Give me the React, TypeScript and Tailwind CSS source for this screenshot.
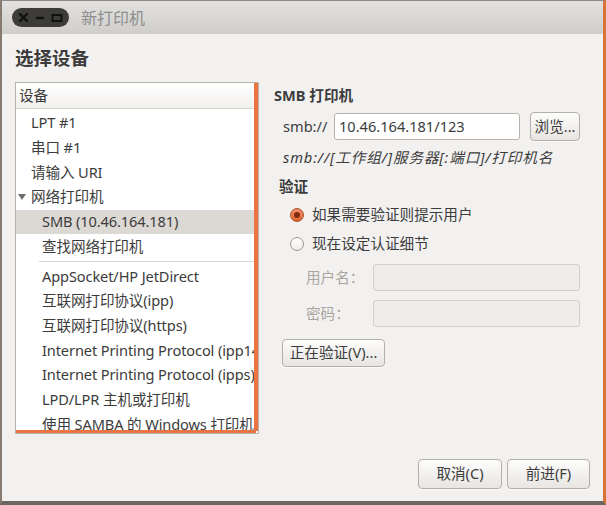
import React from "react";

const font = { fontFamily: '"Noto Sans", "Noto Sans CJK SC", sans-serif' };

type Row = { label: string; level: 1 | 2; selected?: boolean; expander?: boolean };

const topRows: Row[] = [
  { label: "LPT #1", level: 1 },
  { label: "串口 #1", level: 1 },
  { label: "请输入 URI", level: 1 },
  { label: "网络打印机", level: 1, expander: true },
  { label: "SMB (10.46.164.181)", level: 2, selected: true },
  { label: "查找网络打印机", level: 2 },
];

const bottomRows: Row[] = [
  { label: "AppSocket/HP JetDirect", level: 2 },
  { label: "互联网打印协议(ipp)", level: 2 },
  { label: "互联网打印协议(https)", level: 2 },
  { label: "Internet Printing Protocol (ipp14)", level: 2 },
  { label: "Internet Printing Protocol (ipps)", level: 2 },
  { label: "LPD/LPR 主机或打印机", level: 2 },
  { label: "使用 SAMBA 的 Windows 打印机", level: 2 },
];

function TreeRow({ row }: { row: Row }) {
  return (
    <div
      className={`relative flex h-[24.7px] items-center whitespace-nowrap ${
        row.selected ? "bg-[#dcd8d4]" : ""
      } ${row.level === 1 ? "pl-[15px]" : "pl-[26px]"}`}
    >
      {row.expander && (
        <svg className="absolute left-[2px] top-[9px]" width="8" height="7" viewBox="0 0 8 7">
          <path d="M0 0 H8 L4 6 Z" fill="#6f6f6f" />
        </svg>
      )}
      <span>{row.label}</span>
    </div>
  );
}

function Button({ children, className = "" }: { children: React.ReactNode; className?: string }) {
  return (
    <div
      className={`flex items-center justify-center rounded-[4px] border border-[#b5afa9] bg-gradient-to-b from-[#fdfdfc] to-[#e8e5e2] text-[#3c3c3c] shadow-[0_1px_0_rgba(255,255,255,0.8)] ${className}`}
    >
      {children}
    </div>
  );
}

export default function App() {
  return (
    <div
      style={font}
      className="flex h-[505px] w-[606px] flex-col overflow-hidden border-b-[4px] border-l-2 border-r-[3px] border-t border-b-[#6d6660] border-l-[#877a71] border-r-[#d8733a] border-t-[#8a8a8a] bg-[#f2f1f0] text-[14.6px] text-[#3c3c3c]"
    >
      {/* title bar */}
      <div className="flex h-[33px] shrink-0 items-center bg-gradient-to-b from-[#e2e1df] to-[#cfcecb] pl-[10px]">
        <div className="flex h-[19px] w-[57px] items-center justify-between rounded-full bg-[#3d3c38] px-[6px]">
          <svg width="11" height="11" viewBox="0 0 11 11">
            <path d="M2 2 L9 9 M9 2 L2 9" stroke="#111" strokeWidth="2.4" strokeLinecap="round" />
          </svg>
          <svg width="10" height="10" viewBox="0 0 10 10">
            <path d="M1 5 H9" stroke="#111" strokeWidth="2.4" />
          </svg>
          <svg width="12" height="10" viewBox="0 0 12 10">
            <rect x="1.5" y="2" width="9" height="6" fill="none" stroke="#111" strokeWidth="2" />
          </svg>
        </div>
        <span className="ml-[12px] text-[16px] text-[#8e8e8e]">新打印机</span>
      </div>

      {/* body */}
      <div className="flex flex-1 flex-col">
        <div className="flex">
          {/* left column */}
          <div className="pl-[13px] pt-[14px]">
            <div className="flex h-[20px] items-center text-[18.5px] font-bold text-[#3c3c3c]">选择设备</div>
            <div className="mt-[14px] h-[352px] w-[244px] border border-[#b8b2ab] bg-white">
              <div className="relative h-full overflow-hidden">
                <div className="flex h-[26px] items-center border-b border-[#d9d5cf] bg-gradient-to-b from-white to-[#f3f1ee] pl-[3px]">
                  设备
                </div>
                <div className="pt-[2px] tracking-[-0.12px]">
                  {topRows.map((r) => (
                    <TreeRow key={r.label} row={r} />
                  ))}
                  <div className="flex h-[5px] items-center pl-[23px]">
                    <div className="h-px w-full bg-[#dad6d1]" />
                  </div>
                  {bottomRows.map((r) => (
                    <TreeRow key={r.label} row={r} />
                  ))}
                </div>
                {/* overshoot glow */}
                <div className="absolute bottom-[2px] right-0 top-0 w-[4px] bg-[#ea7442]" />
                <div className="absolute bottom-0 left-0 right-[2px] h-[3px] bg-[#ea7442]" />
              </div>
            </div>
          </div>

          {/* right column */}
          <div className="ml-[15px] flex flex-col pt-[52px]">
            <div className="flex h-[20px] items-center font-bold">SMB 打印机</div>
            <div className="mt-[6px] flex h-[29px] items-center pl-[9px]">
              <span className="w-[51px]">smb://</span>
              <div className="flex h-[27px] w-[186px] items-center rounded-[3px] border border-[#b9b3ad] bg-white pl-[4px]">
                10.46.164.181/123
              </div>
              <Button className="ml-[10px] h-[29px] w-[50px]">浏览...</Button>
            </div>
            <div className="mt-[7px] flex h-[20px] items-center whitespace-nowrap pl-[9px] italic tracking-[0.9px]">
              smb://[工作组/]服务器[:端口]/打印机名
            </div>
            <div className="mt-[9px] flex h-[20px] items-center pl-[5px] font-bold">验证</div>
            <div className="mt-[8px] flex h-[20px] items-center pl-[16px]">
              <div className="flex h-[14px] w-[14px] items-center justify-center rounded-full border border-[#a9522c] bg-gradient-to-b from-[#f4916a] to-[#e0622f]">
                <div className="h-[6px] w-[6px] rounded-full bg-[#7f2a0e]" />
              </div>
              <span className="ml-[8px]">如果需要验证则提示用户</span>
            </div>
            <div className="mt-[9px] flex h-[20px] items-center pl-[16px]">
              <div className="h-[14px] w-[14px] rounded-full border border-[#9d968f] bg-gradient-to-b from-white to-[#f0eeeb]" />
              <span className="ml-[8px]">现在设定认证细节</span>
            </div>
            <div className="mt-[10px] flex h-[27px] items-center pl-[32px]">
              <span className="w-[67px] text-[#aaa49e]">用户名：</span>
              <div className="h-[27px] w-[207px] rounded-[3px] border border-[#d3cec9] bg-[#efedea]" />
            </div>
            <div className="mt-[9px] flex h-[27px] items-center pl-[32px]">
              <span className="w-[67px] text-[#aaa49e]">密码：</span>
              <div className="h-[27px] w-[207px] rounded-[3px] border border-[#d3cec9] bg-[#efedea]" />
            </div>
            <Button className="ml-[8px] mt-[12px] h-[28px] w-[103px]">正在验证(V)...</Button>
          </div>
        </div>

        <div className="mt-[25px] flex justify-end gap-[5px] pr-[13px]">
          <Button className="h-[30px] w-[84px]">取消(C)</Button>
          <Button className="h-[30px] w-[83px]">前进(F)</Button>
        </div>
      </div>
    </div>
  );
}
